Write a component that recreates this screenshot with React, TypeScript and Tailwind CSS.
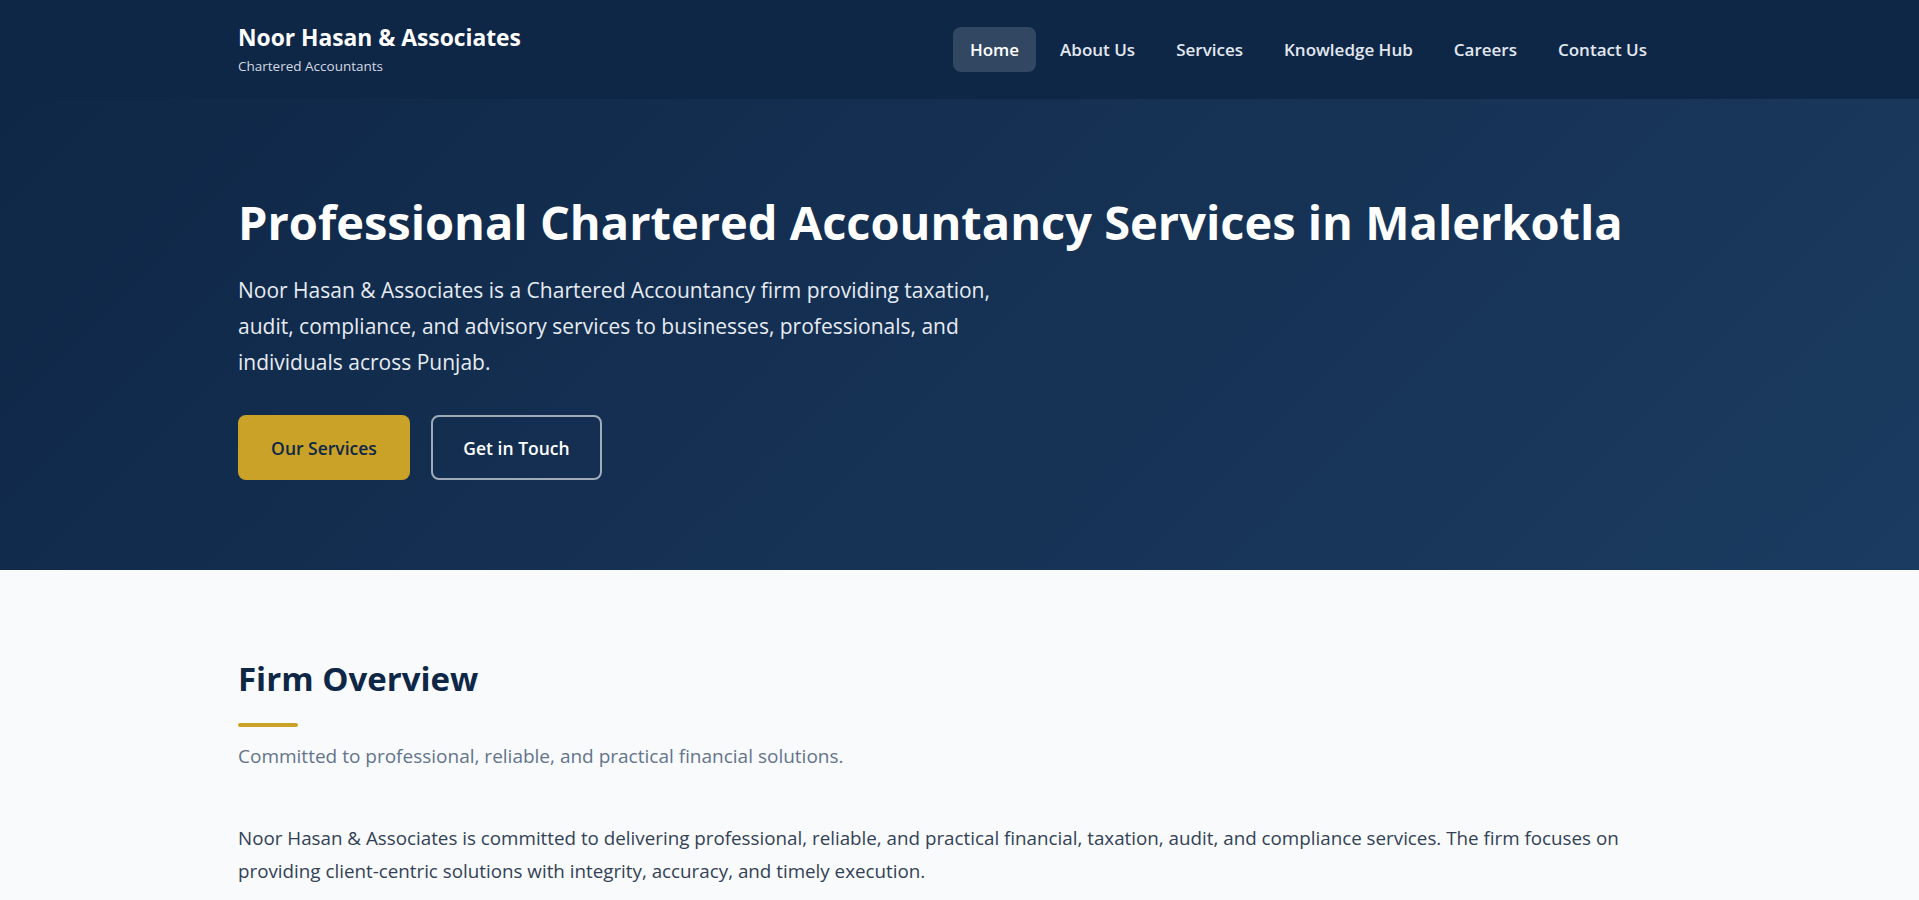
const navLinks = ["Home", "About Us", "Services", "Knowledge Hub", "Careers", "Contact Us"];

const highlights = [
  { title: "Taxation", text: "Income tax, GST registration, returns, assessments and representation." },
  { title: "Audit & Assurance", text: "Statutory, internal, tax and stock audits carried out with care." },
  { title: "Compliance", text: "Company law, ROC filings, TDS and regulatory compliance support." },
  { title: "Advisory", text: "Business structuring, project finance and practical financial advice." },
];

export default function App() {
  return (
    <div className="min-h-screen bg-[#f8fafc] font-['Open_Sans',sans-serif]">
      {/* Header */}
      <header className="bg-[#0f2747]">
        <div className="ml-[238px] flex h-[99px] w-[1426px] items-center justify-between">
          <div>
            <div className="text-[22.8px] font-bold leading-tight text-white">Noor Hasan &amp; Associates</div>
            <div className="mt-[5px] text-[13.5px] leading-tight text-[#d3d9e2]">Chartered Accountants</div>
          </div>
          <nav className="flex items-center gap-[7px]">
            {navLinks.map((link, i) => (
              <a
                key={link}
                href="#"
                className={
                  i === 0
                    ? "rounded-lg bg-white/15 px-[17px] py-[11px] text-[17px] font-semibold leading-[23px] text-white"
                    : "rounded-lg px-[17px] py-[11px] text-[17px] font-semibold leading-[23px] text-[#e2e8f0]"
                }
              >
                {link}
              </a>
            ))}
          </nav>
        </div>
      </header>

      {/* Hero */}
      <section className="bg-[linear-gradient(135deg,#0f2747_0%,#1b3b60_100%)]">
        <div className="ml-[238px] w-[1426px] pt-[95px] pb-[90px]">
          <h1 className="text-[47px] font-bold leading-[1.2] text-white">
            Professional Chartered Accountancy Services in Malerkotla
          </h1>
          <p className="mt-[22px] max-w-[800px] text-[21px] leading-[36px] text-[#e6ebf2]">
            Noor Hasan &amp; Associates is a Chartered Accountancy firm providing taxation, audit, compliance, and
            advisory services to businesses, professionals, and individuals across Punjab.
          </p>
          <div className="mt-[35px] flex gap-[21px]">
            <a
              href="#"
              className="flex h-[65px] w-[172px] items-center justify-center rounded-lg bg-[#c9a227] text-[17.5px] font-semibold text-[#0f2747]"
            >
              Our Services
            </a>
            <a
              href="#"
              className="flex h-[65px] w-[171px] items-center justify-center rounded-lg border-2 border-white/60 text-[17.5px] font-semibold text-white"
            >
              Get in Touch
            </a>
          </div>
        </div>
      </section>

      {/* Firm Overview */}
      <section>
        <div className="ml-[238px] w-[1426px] pt-[89px] pb-[80px]">
          <h2 className="text-[33px] font-bold leading-[1.2] text-[#0f2747]">Firm Overview</h2>
          <div className="mt-[24px] h-[4px] w-[60px] rounded-full bg-[#c9a227]" />
          <p className="mt-[14px] text-[19px] leading-[1.6] text-[#64748b]">
            Committed to professional, reliable, and practical financial solutions.
          </p>
          <p className="mt-[51px] text-[18.8px] leading-[33px] text-[#334155]">
            Noor Hasan &amp; Associates is committed to delivering professional, reliable, and practical financial,
            taxation, audit, and compliance services. The firm focuses on providing client-centric solutions with
            integrity, accuracy, and timely execution.
          </p>
          <p className="mt-[20px] text-[18.8px] leading-[33px] text-[#334155]">
            With a strong understanding of local businesses and regulatory requirements, the firm supports clients in
            making informed decisions and staying compliant at every stage of growth.
          </p>
          <div className="mt-[48px] grid grid-cols-4 gap-6">
            {highlights.map((h) => (
              <div key={h.title} className="rounded-xl border border-[#e2e8f0] bg-white p-6 shadow-sm">
                <div className="mb-3 h-[4px] w-[40px] rounded-full bg-[#c9a227]" />
                <h3 className="text-[19px] font-bold text-[#0f2747]">{h.title}</h3>
                <p className="mt-2 text-[16px] leading-[1.6] text-[#475569]">{h.text}</p>
              </div>
            ))}
          </div>
        </div>
      </section>
    </div>
  );
}
